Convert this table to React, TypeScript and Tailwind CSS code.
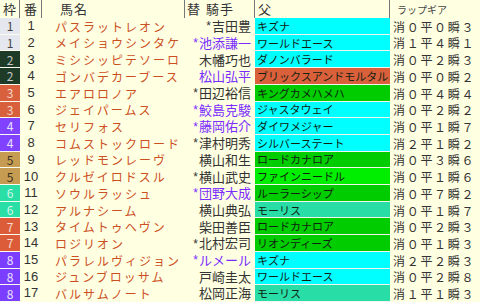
import React from 'react';

interface Row {
    waku: number;
    num: number;
    name: string;
    star: boolean;
    jockey: string;
    purple: boolean;
    sire: string;
    sireBg: string;
    gear: string;
}

const wakuStyle: Record<number, string> = {
    1: 'bg-[#e4e7ee] text-[#444]',
    2: 'bg-[#1d3b27] text-[#c8c8c8]',
    3: 'bg-[#d8603c] text-[#f4d8cc]',
    4: 'bg-[#8142ff] text-[#e8e0ff]',
    5: 'bg-[#c69c52] text-[#3a3020]',
    6: 'bg-[#2adfa6] text-[#d4f6ea]',
    7: 'bg-[#dc5c3a] text-[#f6dccc]',
    8: 'bg-[#7b3dff] text-[#ece4ff]',
};

const sireBgs: Record<string, string> = {
    cyan: 'bg-[#00ffff]',
    red: 'bg-[#d9603b]',
    green: 'bg-[#00cc00]',
    lime: 'bg-[#00ee00]',
    teal: 'bg-[#28dea6]',
};

const rows: Row[] = [
    { waku: 1, num: 1, name: 'パスラットレオン', star: true, jockey: '吉田豊', purple: false, sire: 'キズナ', sireBg: 'cyan', gear: '消０平０瞬３' },
    { waku: 1, num: 2, name: 'メイショウシンタケ', star: true, jockey: '池添謙一', purple: true, sire: 'ワールドエース', sireBg: 'cyan', gear: '消１平４瞬１' },
    { waku: 2, num: 3, name: 'ミシシッピテソーロ', star: false, jockey: '木幡巧也', purple: false, sire: 'ダノンバラード', sireBg: 'cyan', gear: '消０平２瞬３' },
    { waku: 2, num: 4, name: 'ゴンバデカーブース', star: false, jockey: '松山弘平', purple: true, sire: 'ブリックスアンドモルタル', sireBg: 'red', gear: '消０平０瞬２' },
    { waku: 3, num: 5, name: 'エアロロノア', star: true, jockey: '田辺裕信', purple: false, sire: 'キングカメハメハ', sireBg: 'green', gear: '消０平４瞬４' },
    { waku: 3, num: 6, name: 'ジェイパームス', star: true, jockey: '鮫島克駿', purple: true, sire: 'ジャスタウェイ', sireBg: 'cyan', gear: '消０平２瞬２' },
    { waku: 4, num: 7, name: 'セリフォス', star: true, jockey: '藤岡佑介', purple: true, sire: 'ダイワメジャー', sireBg: 'cyan', gear: '消０平１瞬７' },
    { waku: 4, num: 8, name: 'コムストックロード', star: true, jockey: '津村明秀', purple: false, sire: 'シルバーステート', sireBg: 'cyan', gear: '消２平１瞬２' },
    { waku: 5, num: 9, name: 'レッドモンレーヴ', star: false, jockey: '横山和生', purple: false, sire: 'ロードカナロア', sireBg: 'green', gear: '消０平３瞬６' },
    { waku: 5, num: 10, name: 'クルゼイロドスル', star: true, jockey: '横山武史', purple: false, sire: 'ファインニードル', sireBg: 'lime', gear: '消０平１瞬６' },
    { waku: 6, num: 11, name: 'ソウルラッシュ', star: true, jockey: '団野大成', purple: true, sire: 'ルーラーシップ', sireBg: 'green', gear: '消０平７瞬２' },
    { waku: 6, num: 12, name: 'アルナシーム', star: false, jockey: '横山典弘', purple: false, sire: 'モーリス', sireBg: 'teal', gear: '消０平１瞬７' },
    { waku: 7, num: 13, name: 'タイムトゥヘヴン', star: false, jockey: '柴田善臣', purple: false, sire: 'ロードカナロア', sireBg: 'green', gear: '消０平２瞬３' },
    { waku: 7, num: 14, name: 'ロジリオン', star: true, jockey: '北村宏司', purple: false, sire: 'リオンディーズ', sireBg: 'green', gear: '消０平１瞬３' },
    { waku: 8, num: 15, name: 'パラレルヴィジョン', star: true, jockey: 'ルメール', purple: true, sire: 'キズナ', sireBg: 'cyan', gear: '消２平２瞬３' },
    { waku: 8, num: 16, name: 'ジュンブロッサム', star: false, jockey: '戸崎圭太', purple: false, sire: 'ワールドエース', sireBg: 'cyan', gear: '消０平２瞬８' },
    { waku: 8, num: 17, name: 'バルサムノート', star: false, jockey: '松岡正海', purple: false, sire: 'モーリス', sireBg: 'teal', gear: '消１平１瞬３' },
];

const jp = "font-['Noto_Sans_CJK_JP',sans-serif]";

export default function App() {
    return (
        <div className={`w-[480px] h-[302px] overflow-hidden bg-[#ffffe2] grid grid-cols-[20px_22px_143px_70px_135px_90px] grid-rows-[18px_repeat(17,1fr)] ${jp} leading-[1.1]`}>
            {/* header */}
            <div className="flex items-center justify-center text-[13px] text-[#333] border-r border-[#777]">枠</div>
            <div className="flex items-center justify-center text-[13px] text-[#333] border-r border-[#777]">番</div>
            <div className="flex items-center pl-[18px] text-[13px] text-[#333] tracking-[1px] border-r border-[#777]">馬名</div>
            <div className="flex items-center pl-[2px] text-[13px] text-[#333] border-r border-[#777]">
                <span>替</span>
                <span className="ml-[6px] tracking-[1px]">騎手</span>
            </div>
            <div className="flex items-center pl-[3px] text-[13px] text-[#333] border-r border-[#777]">父</div>
            <div className="flex items-center pl-[7px] text-[10px] text-[#444]">ラップギア</div>

            {rows.map((r) => (
                <React.Fragment key={r.num}>
                    <div className={`flex items-center justify-center text-[12px] border-b border-[#fbfbf0] ${wakuStyle[r.waku]}`}>
                        {r.waku}
                    </div>
                    <div className="flex items-center justify-center text-[13px] text-[#333] font-['Liberation_Sans',sans-serif]">
                        {r.num}
                    </div>
                    <div className="flex items-center pl-[13px] text-[12px] tracking-[2px] text-[#cc4f22] whitespace-nowrap overflow-hidden">
                        {r.name}
                    </div>
                    <div className={`flex items-center justify-end gap-[1px] pr-[4px] text-[13px] whitespace-nowrap ${r.purple ? 'text-[#7a2cff]' : 'text-[#333]'}`}>
                        {r.star && <span className="font-['Liberation_Sans',sans-serif] text-[12px] leading-none">*</span>}
                        <span>{r.jockey}</span>
                    </div>
                    <div className={`flex items-center pl-[2px] text-[11px] text-[#102010] whitespace-nowrap overflow-hidden border-b border-[#f4f4ee] ${sireBgs[r.sireBg]}`}>
                        {r.sire}
                    </div>
                    <div className="flex items-center pl-[3px] text-[12px] tracking-[1.7px] text-[#333] whitespace-nowrap">
                        {r.gear}
                    </div>
                </React.Fragment>
            ))}
        </div>
    );
}
